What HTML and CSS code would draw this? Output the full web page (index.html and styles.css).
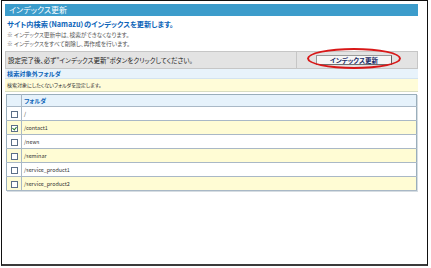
FILE: index.html
```html
<!DOCTYPE html>
<html lang="ja">
<head>
    <meta charset="UTF-8">
    <meta name="viewport" content="width=device-width, initial-scale=1.0">
    <title>インデックス更新</title>
    <link rel="stylesheet" href="styles.css">
</head>
<body>
    <div class="frame">
        <div class="panel">
            <div class="page-title">インデックス更新</div>
            <div class="intro">
                <p class="intro-lead">サイト内検索（Namazu）のインデックスを更新します。</p>
                <p class="note">※ インデックス更新中は、検索ができなくなります。</p>
                <p class="note">※ インデックスをすべて削除し、再作成を行います。</p>
            </div>
            <div class="update-bar">
                <div class="update-text">設定完了後、必ず”インデックス更新”ボタンをクリックしてください。</div>
                <div class="update-action">
                    <a href="javascript:;" class="update-button">インデックス更新</a>
                    <!-- 赤丸の強調 -->
                    <span class="mark"></span>
                </div>
            </div>
            <div class="section-title">検索対象外フォルダ</div>
            <div class="section-desc">検索対象にしたくないフォルダを設定します。</div>
            <table class="folder-table">
                <tr class="head">
                    <th class="check"></th>
                    <th>フォルダ</th>
                </tr>
                <tr>
                    <td class="check"><span class="box"></span></td>
                    <td>/</td>
                </tr>
                <tr class="odd">
                    <td class="check"><span class="box checked"></span></td>
                    <td>/contact1</td>
                </tr>
                <tr>
                    <td class="check"><span class="box"></span></td>
                    <td>/news</td>
                </tr>
                <tr class="odd">
                    <td class="check"><span class="box"></span></td>
                    <td>/seminar</td>
                </tr>
                <tr>
                    <td class="check"><span class="box"></span></td>
                    <td>/service_product1</td>
                </tr>
                <tr class="odd">
                    <td class="check"><span class="box"></span></td>
                    <td>/service_product2</td>
                </tr>
            </table>
        </div>
    </div>
</body>
</html>
```

FILE: styles.css
```css
* {
    padding: 0;
    margin: 0;
    box-sizing: border-box;
}

body {
    background: #ffffff;
    font-family: "Noto Sans CJK JP", "Noto Sans", sans-serif;
    font-feature-settings: "palt";
    color: #333333;
}

a {
    text-decoration: none;
    color: #222222;
}

.frame {
    width: 427px;
    height: 266px;
    margin-left: 1px;
    border: 1px solid #111111;
    border-bottom: 2px solid #3a3a3a;
}

.panel {
    padding: 3px 9px 0 3px;
}

.page-title {
    height: 12px;
    line-height: 12px;
    background: #3c9ccb;
    color: #ffffff;
    font-size: 8px;
    padding-left: 4px;
}

.intro {
    padding: 3px 0 0 2px;
}

.intro-lead {
    color: #0b63b8;
    font-weight: bold;
    font-size: 7.2px;
    line-height: 11px;
}

.note {
    color: #555555;
    font-size: 5.7px;
    line-height: 9px;
}

.update-bar {
    display: flex;
    margin-top: 3px;
    height: 18px;
    background: #e3e3e3;
    border: 1px solid #c6c6c6;
}

.update-text {
    flex: 1;
    font-size: 6.5px;
    line-height: 16px;
    padding-left: 2px;
    color: #222222;
    border-right: 1px solid #c6c6c6;
}

.update-action {
    position: relative;
    width: 120px;
    display: flex;
    align-items: center;
    justify-content: center;
    padding-right: 6px;
}

.update-button {
    display: block;
    width: 76px;
    height: 10px;
    line-height: 8px;
    text-align: center;
    font-size: 6.5px;
    font-weight: bold;
    background: #f6f6f6;
    border: 1px solid #9a9a9a;
    border-right-color: #606060;
    border-bottom-color: #707070;
    color: #1a2a66;
}

.mark {
    position: absolute;
    left: 10px;
    top: -4px;
    width: 94px;
    height: 21px;
    border: 2px solid #d81818;
    border-radius: 50%;
}

.section-title {
    height: 10px;
    line-height: 10px;
    background: #e8f3fb;
    border-bottom: 1px solid #d4e4f0;
    color: #0b63b8;
    font-weight: bold;
    font-size: 6.2px;
    padding-left: 2px;
}

.section-desc {
    height: 13px;
    line-height: 12px;
    background: #fffcd8;
    border-bottom: 1px solid #d8dcc0;
    font-size: 5px;
    padding-left: 2px;
    color: #333333;
}

.folder-table {
    width: 411px;
    margin: 2px 0 0 1px;
    border-collapse: collapse;
    border: 1px solid #9aaebb;
    box-shadow: 1px 1px 0 #d6dde2;
    font-size: 5.4px;
}

.folder-table th,
.folder-table td {
    height: 14px;
    text-align: left;
    padding-left: 2px;
    border-bottom: 1px solid #a9b8c6;
    background: #ffffff;
    font-weight: normal;
}

.folder-table tr.odd td {
    background: #fffcd4;
}

.folder-table .head th {
    height: 12px;
    background: #e6f2fb;
    color: #0b63b8;
    font-weight: bold;
    font-size: 6px;
}

.folder-table .check {
    width: 15px;
    padding-left: 0;
    text-align: center;
    border-right: 1px solid #a9b8c6;
}

.box {
    display: inline-block;
    width: 7px;
    height: 7px;
    border: 1px solid #5c6f88;
    background: #ffffff;
    vertical-align: middle;
    position: relative;
}

.box.checked::after {
    content: "";
    position: absolute;
    left: 1px;
    top: 0px;
    width: 2px;
    height: 3px;
    border-right: 1px solid #2a7a2a;
    border-bottom: 1px solid #2a7a2a;
    transform: rotate(40deg);
}
```
